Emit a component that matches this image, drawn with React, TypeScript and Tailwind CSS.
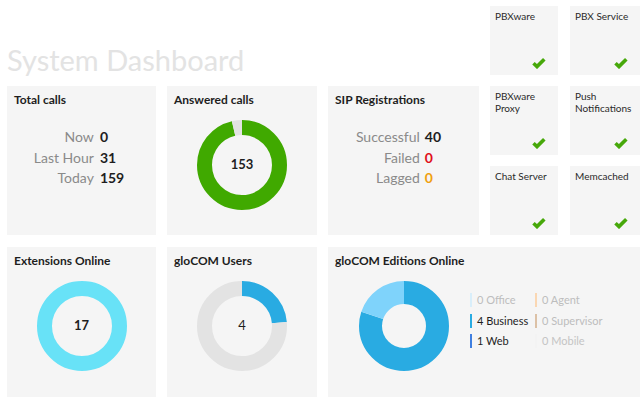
import type { ReactNode } from 'react';

type Segment = { value: number; color: string };

function Donut({
  segments,
  outer,
  inner,
  label,
  bold = true,
}: {
  segments: Segment[];
  outer: number;
  inner: number;
  label?: string;
  bold?: boolean;
}) {
  const size = outer * 2;
  const r = (outer + inner) / 2;
  const width = outer - inner;
  const circ = 2 * Math.PI * r;
  const total = segments.reduce((s, x) => s + x.value, 0);
  let offset = 0;

  return (
    <div className="relative" style={{ width: size, height: size }}>
      <svg width={size} height={size} viewBox={`0 0 ${size} ${size}`}>
        <g transform={`rotate(-90 ${outer} ${outer})`}>
          {segments.map((seg, i) => {
            const len = (seg.value / total) * circ;
            const el = (
              <circle
                key={i}
                cx={outer}
                cy={outer}
                r={r}
                fill="none"
                stroke={seg.color}
                strokeWidth={width}
                strokeDasharray={`${len} ${circ - len}`}
                strokeDashoffset={-offset}
              />
            );
            offset += len;
            return el;
          })}
        </g>
      </svg>
      {label && (
        <span
          className={`absolute inset-0 flex items-center justify-center text-[13px] text-[#1e1e1e] ${
            bold ? 'font-bold' : 'font-normal'
          }`}
        >
          {label}
        </span>
      )}
    </div>
  );
}

function Card({ title, children, className = '' }: { title: string; children?: ReactNode; className?: string }) {
  return (
    <div className={`bg-[#f5f5f5] pl-[7px] pt-[6px] flex flex-col ${className}`}>
      <h3 className="text-[12px] leading-[16px] font-bold text-[#1e1e1e]">{title}</h3>
      {children}
    </div>
  );
}

function Check() {
  return (
    <svg width="14" height="12" viewBox="0 0 14 12">
      <path d="M1.5 6.3 L5 9.6 L12.3 2.2" fill="none" stroke="#47a80a" strokeWidth="3.6" strokeLinejoin="miter" />
    </svg>
  );
}

function StatusTile({ name }: { name: string }) {
  return (
    <div className="bg-[#f5f5f5] h-[69px] pl-[5px] pt-[4px] pr-[3px] flex flex-col justify-between pb-[6px]">
      <p className="text-[10px] leading-[12px] text-[#2a2a2a]">{name}</p>
      <div className="flex justify-end pr-[9px]">
        <Check />
      </div>
    </div>
  );
}

function StatRows({ rows, className = '' }: { rows: [string, string, string][]; className?: string }) {
  return (
    <div className={`grid grid-cols-[auto_auto] justify-center mt-[19px] text-[14px] leading-[20.5px] ${className}`}>
      {rows.map(([label, value, color]) => (
        <div key={label} className="contents">
          <span className="text-right text-[#8a8a8a]">{label}</span>
          <span className="font-bold" style={{ color }}>
            {value}
          </span>
        </div>
      ))}
    </div>
  );
}

function LegendItem({ bar, text, textColor }: { bar: string; text: string; textColor: string }) {
  return (
    <div className="flex items-center h-[20.5px]">
      <span className="w-[2px] h-[14px] mr-[5px]" style={{ backgroundColor: bar }} />
      <span className="text-[11px]" style={{ color: textColor }}>
        {text}
      </span>
    </div>
  );
}

export default function App() {
  const tiles = ['PBXware', 'PBX Service', 'PBXware Proxy', 'Push Notifications', 'Chat Server', 'Memcached'];

  return (
    <div className="w-[640px] h-[398px] overflow-hidden bg-white font-['Lato',sans-serif] pl-[7px] pt-[6px]">
      <div className="flex">
        <div className="w-[472px] flex flex-col justify-end">
          <h1 className="text-[29px] leading-[36px] font-normal text-[#e3e3e3] mb-[8px]">System Dashboard</h1>
          <div className="grid grid-cols-[149px_150px_151px] gap-x-[11px] h-[149px]">
            <Card title="Total calls">
              <StatRows
                className="pr-[12px] gap-x-[6px]"
                rows={[
                  ['Now', '0', '#1e1e1e'],
                  ['Last Hour', '31', '#1e1e1e'],
                  ['Today', '159', '#1e1e1e'],
                ]}
              />
            </Card>
            <Card title="Answered calls">
              <div className="flex justify-center pr-[7px] mt-[12px]">
                <Donut
                  outer={45}
                  inner={30}
                  label="153"
                  segments={[
                    { value: 153, color: '#40a900' },
                    { value: 6, color: '#e3e3e3' },
                  ]}
                />
              </div>
            </Card>
            <Card title="SIP Registrations">
              <StatRows
                className="pr-[17px] gap-x-[5px]"
                rows={[
                  ['Successful', '40', '#1e1e1e'],
                  ['Failed', '0', '#e0101a'],
                  ['Lagged', '0', '#f0a010'],
                ]}
              />
            </Card>
          </div>
        </div>
        <div className="ml-[11px] grid grid-cols-[68px_70px] gap-x-[12px] gap-y-[11px]">
          {tiles.map((t) => (
            <StatusTile key={t} name={t} />
          ))}
        </div>
      </div>

      <div className="grid grid-cols-[149px_150px_330px] gap-x-[11px] mt-[12px] h-[150px]">
        <Card title="Extensions Online">
          <div className="flex justify-center pr-[7px] mt-[12px]">
            <Donut outer={45} inner={30} label="17" segments={[{ value: 17, color: '#68e2f7' }]} />
          </div>
        </Card>
        <Card title="gloCOM Users">
          <div className="flex justify-center pr-[7px] mt-[12px]">
            <Donut
              outer={45}
              inner={30}
              label="4"
              bold={false}
              segments={[
                { value: 4, color: '#29abe2' },
                { value: 13, color: '#e3e3e3' },
              ]}
            />
          </div>
        </Card>
        <Card title="gloCOM Editions Online">
          <div className="flex items-start mt-[12px] pl-[24px]">
            <Donut
              outer={45}
              inner={22}
              segments={[
                { value: 4, color: '#29abe2' },
                { value: 1, color: '#7fd3fb' },
              ]}
            />
            <div className="ml-[21px] mt-[9px] grid grid-cols-[65px_auto] grid-flow-col grid-rows-3">
              <LegendItem bar="#d8eefa" text="0 Office" textColor="#bdbdbd" />
              <LegendItem bar="#29abe2" text="4 Business" textColor="#1e1e1e" />
              <LegendItem bar="#3f7fe0" text="1 Web" textColor="#1e1e1e" />
              <LegendItem bar="#fad7b3" text="0 Agent" textColor="#bdbdbd" />
              <LegendItem bar="#dcc1a6" text="0 Supervisor" textColor="#bdbdbd" />
              <LegendItem bar="#f3f3f3" text="0 Mobile" textColor="#c4c4c4" />
            </div>
          </div>
        </Card>
      </div>
    </div>
  );
}
